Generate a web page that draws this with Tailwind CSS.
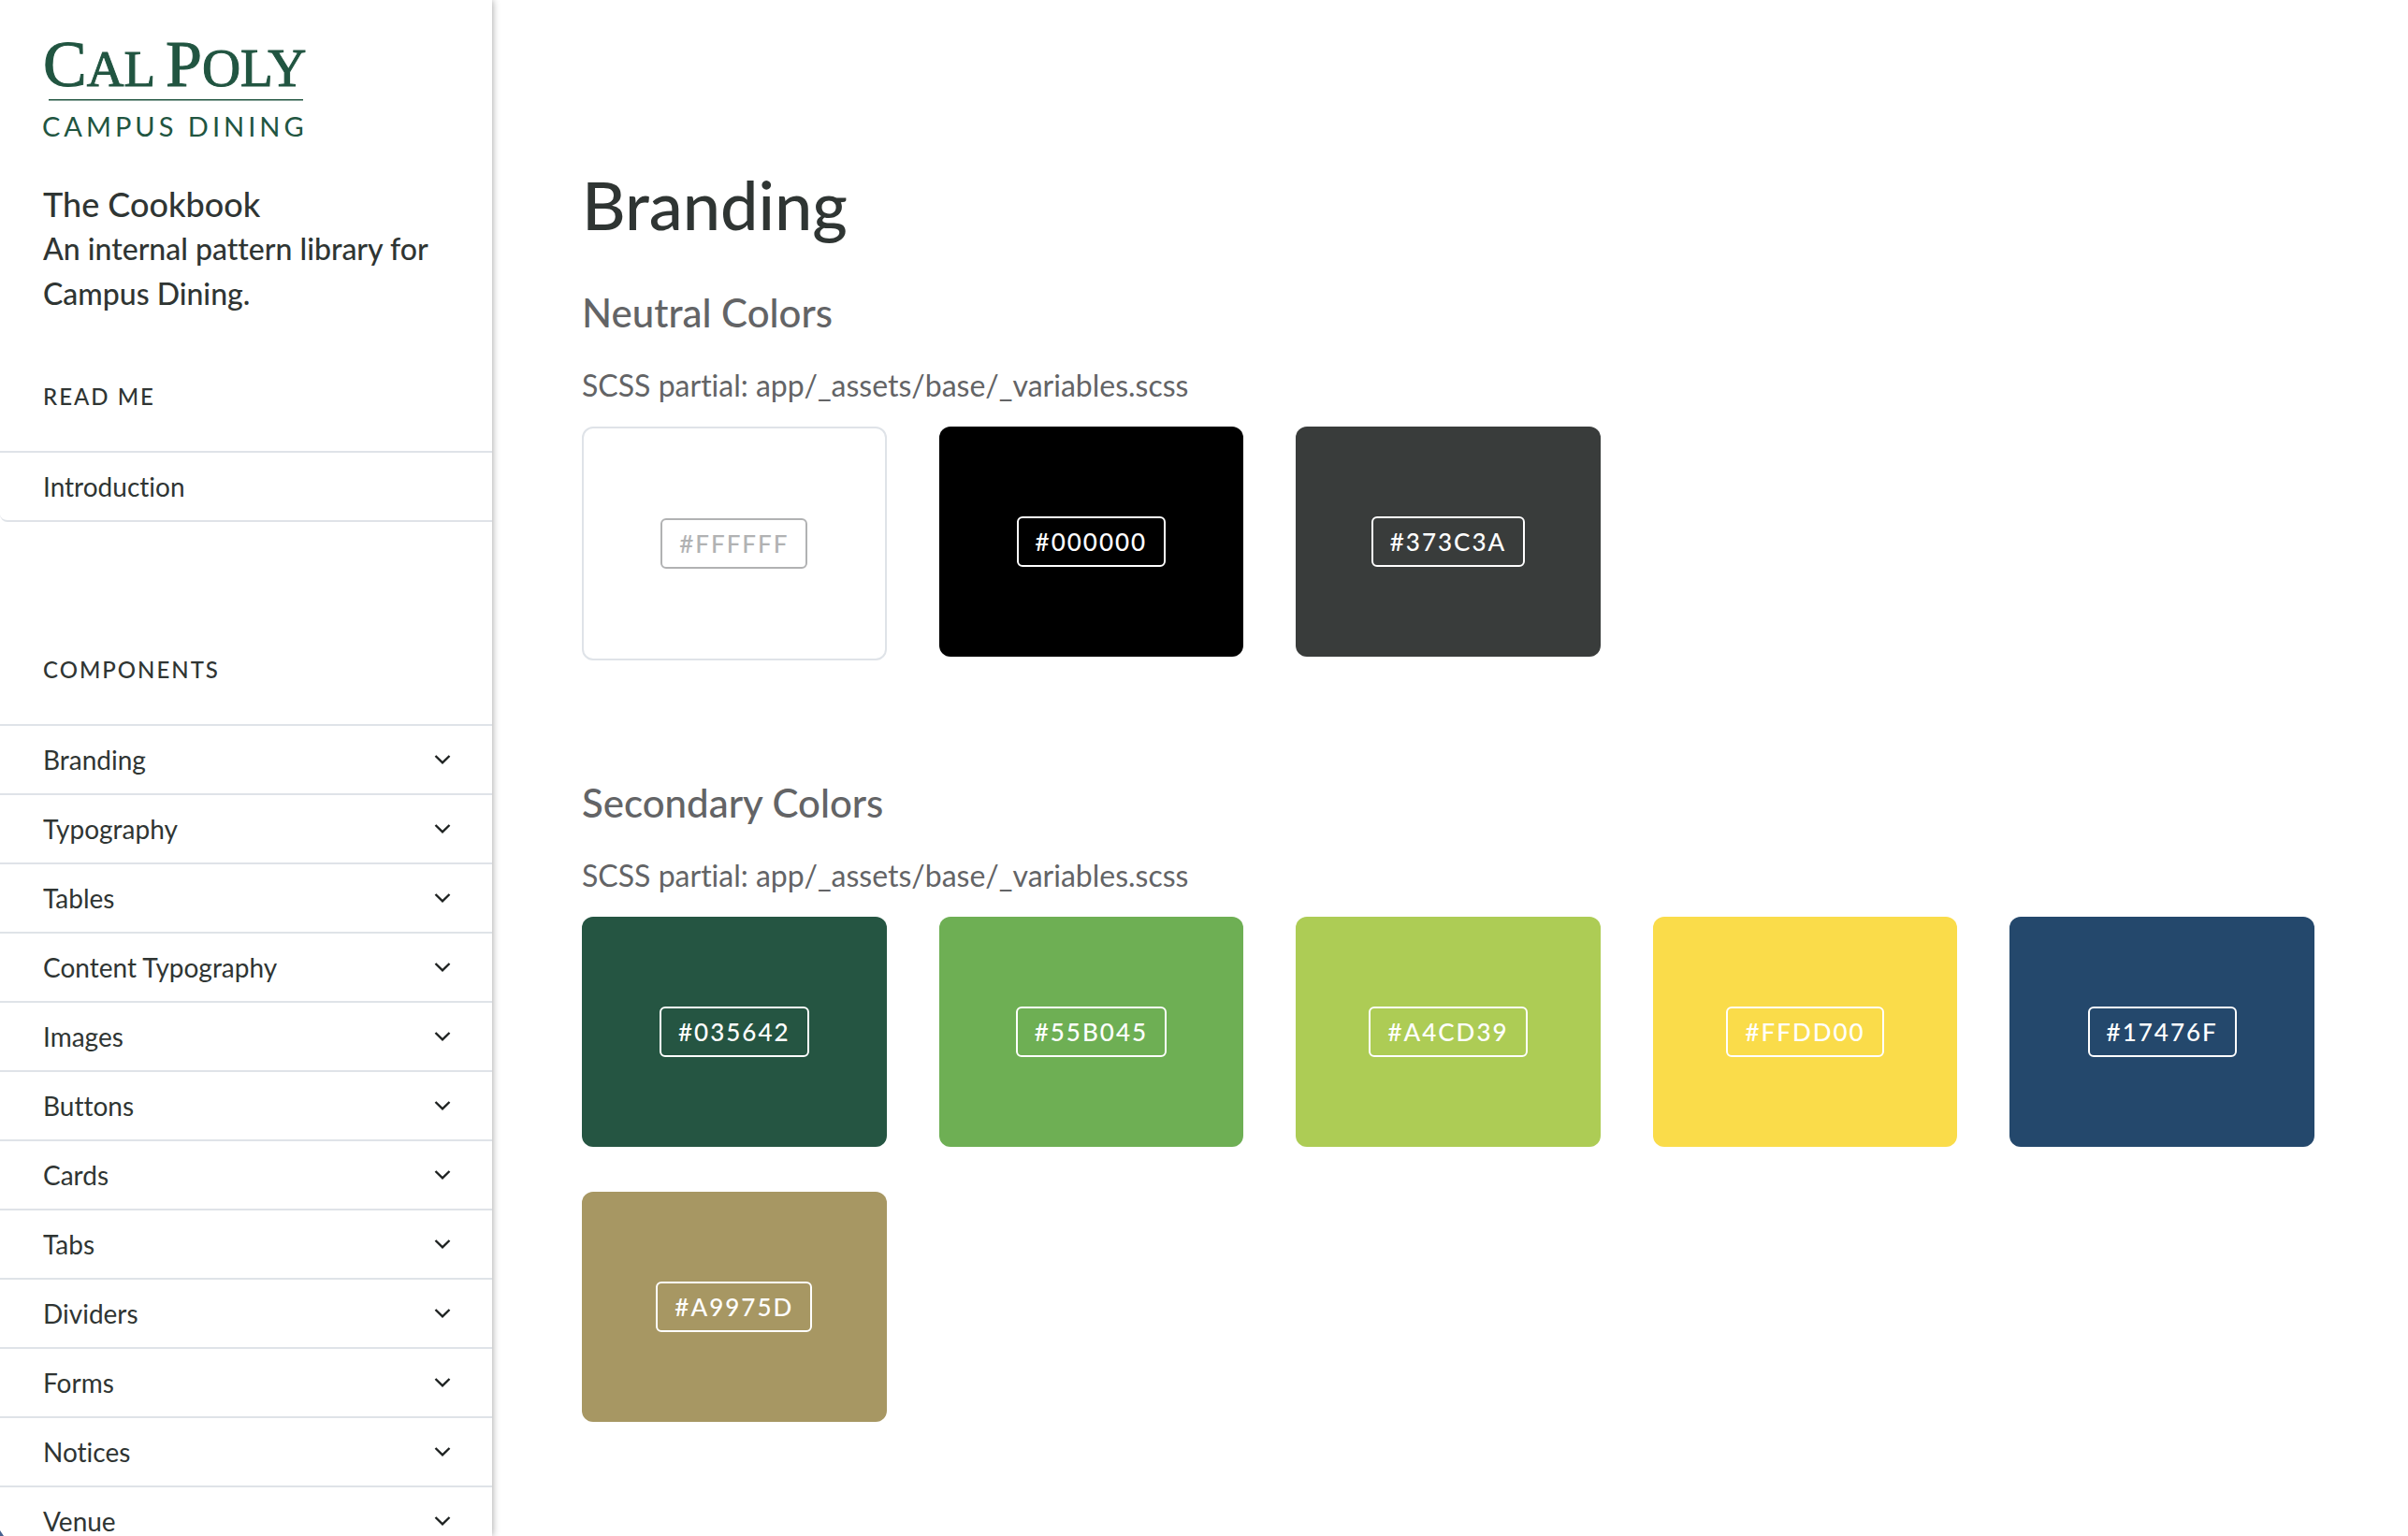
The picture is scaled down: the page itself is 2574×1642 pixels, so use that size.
<!DOCTYPE html>
<html lang="en">
<head>
<meta charset="utf-8">
<meta name="viewport" content="width=device-width, initial-scale=1">
<title>The Cookbook – Branding</title>
<script src="https://cdn.jsdelivr.net/npm/@tailwindcss/browser@4"></script>
</head>
<body class="flex min-h-screen bg-white font-['Lato',sans-serif] text-[#2f3533] [font-variant-ligatures:none]">

<aside class="sticky top-0 z-10 h-screen w-[526px] shrink-0 overflow-y-auto bg-white shadow-[0_0_8px_rgba(0,0,0,0.4)] [scrollbar-width:none]">
  <header class="px-[46px] pt-[18px]">
    <a href="#" aria-label="Cal Poly Campus Dining" class="block">
      <svg class="block overflow-visible" width="290" height="136" viewBox="0 -20 290 136" fill="#215541" aria-hidden="true">
        <g font-family="Liberation Serif, serif" stroke="#215541" stroke-width="1">
          <text x="0" y="54" font-size="70">C<tspan font-size="55">AL</tspan></text>
          <text x="131" y="54" font-size="70">P<tspan font-size="57">OLY</tspan></text>
        </g>
        <rect x="6" y="68" width="272" height="1.5"/>
        <text x="-1" y="108" font-family="Lato, sans-serif" font-size="29" letter-spacing="4">CAMPUS DINING</text>
      </svg>
    </a>
    <h1 class="mt-[40px] text-[36px] leading-[48px] font-medium">The Cookbook</h1>
    <p class="text-[32px] leading-[48px] font-medium">An internal pattern library for Campus Dining.</p>
  </header>

  <nav aria-label="Pattern library">
    <h2 class="mt-[68px] px-[46px] text-[24px] leading-[36px] font-medium tracking-[2px] uppercase">Read me</h2>
    <ul class="mt-[40px]">
      <li class="rounded-bl-[8px] border-y-2 border-[#dfe3e8]"><a href="#introduction" class="flex h-[72px] items-center px-[46px] text-[28px]">Introduction</a></li>
    </ul>

    <h2 class="mt-[140px] px-[46px] text-[24px] leading-[36px] font-medium tracking-[2px] uppercase">Components</h2>
    <ul id="components" class="mt-[40px]"></ul>
  </nav>
  <svg class="fixed bottom-0 left-0" width="4" height="6" viewBox="0 0 4 6" fill="#46608f" aria-hidden="true"><path d="M0 0 4 6H0Z"/></svg>
</aside>

<main class="min-w-0 flex-1 pt-[174px] pr-[100px] pb-[100px] pl-[96px]">
  <h1 class="text-[72px] leading-[88px] font-medium">Branding</h1>

  <section class="mt-[46px] text-[#636466]">
    <h2 class="text-[42px] leading-[52px] font-medium">Neutral Colors</h2>
    <p class="mt-[28px] text-[32px] leading-[48px]">SCSS partial: app/_assets/base/_variables.scss</p>
    <div class="mt-[20px] grid grid-cols-5 items-start gap-x-[56px] gap-y-[48px] text-[26px] leading-[50px] font-medium tracking-[2px] text-white">
      <div class="flex justify-center rounded-[12px] border-2 border-[#dfe3e8] py-[96px] text-[#b1b2b3]"><span class="rounded-[6px] border-2 px-[18px]">#FFFFFF</span></div>
      <div class="flex justify-center rounded-[12px] bg-black py-[96px]"><span class="rounded-[6px] border-2 px-[18px]">#000000</span></div>
      <div class="flex justify-center rounded-[12px] bg-[#393c3b] py-[96px]"><span class="rounded-[6px] border-2 px-[18px]">#373C3A</span></div>
    </div>
  </section>

  <section class="mt-[126px] text-[#636466]">
    <h2 class="text-[42px] leading-[52px] font-medium">Secondary Colors</h2>
    <p class="mt-[28px] text-[32px] leading-[48px]">SCSS partial: app/_assets/base/_variables.scss</p>
    <div class="mt-[20px] grid grid-cols-5 items-start gap-x-[56px] gap-y-[48px] text-[26px] leading-[50px] font-medium tracking-[2px] text-white">
      <div class="flex justify-center rounded-[12px] bg-[#255542] py-[96px]"><span class="rounded-[6px] border-2 px-[18px]">#035642</span></div>
      <div class="flex justify-center rounded-[12px] bg-[#6eaf54] py-[96px]"><span class="rounded-[6px] border-2 px-[18px]">#55B045</span></div>
      <div class="flex justify-center rounded-[12px] bg-[#adcc55] py-[96px]"><span class="rounded-[6px] border-2 px-[18px]">#A4CD39</span></div>
      <div class="flex justify-center rounded-[12px] bg-[#fadc4a] py-[96px]"><span class="rounded-[6px] border-2 px-[18px]">#FFDD00</span></div>
      <div class="flex justify-center rounded-[12px] bg-[#24486c] py-[96px]"><span class="rounded-[6px] border-2 px-[18px]">#17476F</span></div>
      <div class="flex justify-center rounded-[12px] bg-[#a79763] py-[96px]"><span class="rounded-[6px] border-2 px-[18px]">#A9975D</span></div>
    </div>
  </section>
</main>

<script>
  const items = ['Branding', 'Typography', 'Tables', 'Content Typography', 'Images', 'Buttons', 'Cards', 'Tabs', 'Dividers', 'Forms', 'Notices', 'Venue'];
  document.getElementById('components').innerHTML = items.map(name => `
    <li class="border-t-2 border-[#dfe3e8]">
      <button type="button" aria-expanded="false" class="flex h-[72px] w-full items-center justify-between pr-[44px] pl-[46px] text-left text-[28px]">
        ${name}
        <svg width="18" height="12" viewBox="0 0 18 12" fill="none" stroke="#1d2120" stroke-width="2.4" aria-hidden="true"><path d="M1.500 2 9 9.3 16.500 2"/></svg>
      </button>
    </li>`).join('');
</script>
</body>
</html>
